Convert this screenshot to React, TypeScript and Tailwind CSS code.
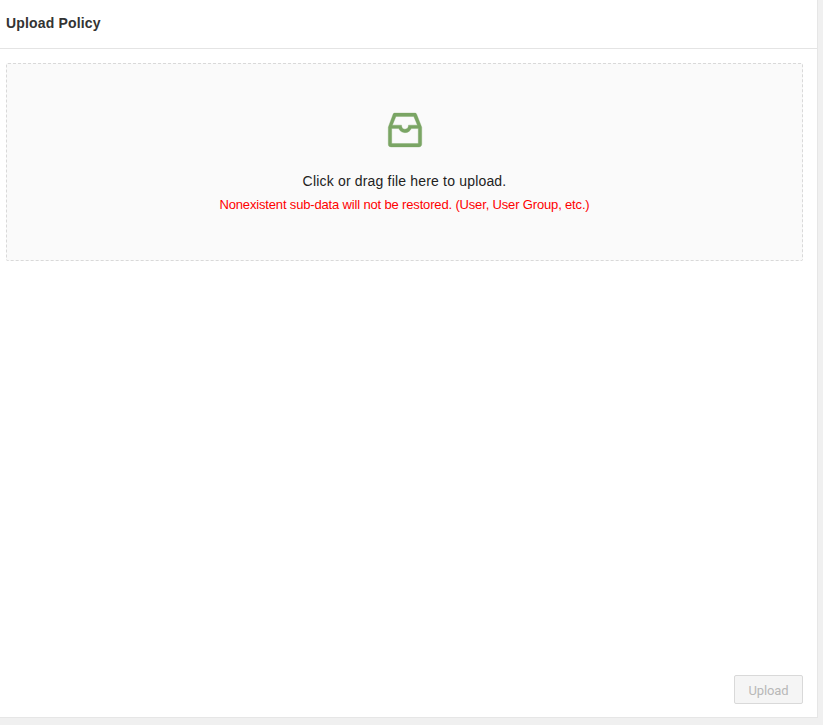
export default function App() {
  return (
    <div className="w-[823px] h-[725px] bg-[#f0f0f0] overflow-hidden font-['Liberation_Sans',Arial,sans-serif]">
      <div className="w-[818px] h-[718px] bg-white border-r border-b border-[#e6e6e6] flex flex-col">
        <div className="h-[49px] shrink-0 border-b border-[#e4e4e4] flex items-center px-[6px] pb-[2px] text-[14px] tracking-[0.16px] font-bold text-[#333333]">
          Upload Policy
        </div>
        <div className="flex-1 flex flex-col pt-[14px] pl-[6px] pr-[14px] pb-[13px]">
          <div className="h-[198px] border border-dashed border-[#d9d9d9] bg-[#fafafa] rounded-[2px] flex flex-col items-center pt-[46px]">
            <svg viewBox="64 64 896 896" width="40" height="40" fill="#7aa564" stroke="#7aa564" strokeWidth="8" aria-hidden="true">
              <path d="M885.2 446.3l-.2-.8-112.2-285.1c-5-16.1-19.9-27.2-36.8-27.2H281.2c-17 0-32.1 11.3-36.9 27.6L139.4 443l-.3.7-.2.8c-1.3 4.9-1.7 9.9-1 14.8-.1 1.6-.2 3.2-.2 4.8V830a60.9 60.9 0 0 0 60.8 60.8h627.2c33.5 0 60.8-27.3 60.9-60.8V464.1c0-1.3 0-2.6-.1-3.7.4-4.9 0-9.6-1.3-14.1zm-295.8-43l-.3 15.7c-.8 44.9-31.8 75.1-77.1 75.1-22.1 0-41.1-7.1-54.8-20.6S436 441.2 435.6 419l-.3-15.7H229.5L309 210h399.2l81.7 193.3H589.4zm-375 76.8h157.3c24.3 57.1 76 90.8 140.4 90.8 33.7 0 65-9.4 90.3-27.2 22.2-15.6 39.5-37.4 50.7-63.6h156.5V814H214.4V480.1z" />
            </svg>
            <p className="mt-[20px] text-[14px] tracking-[0.18px] leading-[22px] text-[#222222]">Click or drag file here to upload.</p>
            <p className="mt-[2px] text-[13px] tracking-[-0.16px] leading-[22px] text-[#ff0000]">Nonexistent sub-data will not be restored. (User, User Group, etc.)</p>
          </div>
          <div className="mt-auto flex justify-end">
            <button disabled className="w-[69px] h-[29px] pt-[2px] border border-[#d9d9d9] bg-[#f5f5f5] rounded-[2px] text-[13px] tracking-[-0.1px] text-[#b8b8b8] font-['Roboto',sans-serif]">
              Upload
            </button>
          </div>
        </div>
      </div>
    </div>
  );
}
